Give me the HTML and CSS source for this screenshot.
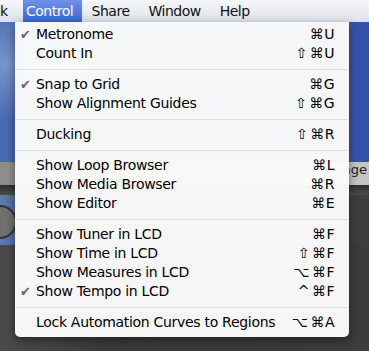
FILE: index.html
```html
<!DOCTYPE html>
<html lang="en">
<head>
  <meta charset="UTF-8" />
  <title>Control menu</title>
  <link rel="stylesheet" href="styles.css">
</head>
<body>
  <div class="screen">
    <div class="menubar">
      <span class="prev">k</span>
      <span class="title active">Control</span>
      <span class="title">Share</span>
      <span class="title">Window</span>
      <span class="title">Help</span>
    </div>

    <div class="desk"></div>
    <div class="toolbar"><span class="tab">age</span></div>
    <div class="edge"></div>
    <div class="track"><span class="knob"></span></div>
    <div class="floor"><span class="playhead"></span></div>

    <ul class="dropdown">
      <li class="item checked"><span>Metronome</span><span class="keys">⌘U</span></li>
      <li class="item"><span>Count In</span><span class="keys"><span class="mod">⇧</span>⌘U</span></li>
      <li class="sep"></li>
      <li class="item checked"><span>Snap to Grid</span><span class="keys">⌘G</span></li>
      <li class="item"><span>Show Alignment Guides</span><span class="keys"><span class="mod">⇧</span>⌘G</span></li>
      <li class="sep"></li>
      <li class="item"><span>Ducking</span><span class="keys"><span class="mod">⇧</span>⌘R</span></li>
      <li class="sep"></li>
      <li class="item"><span>Show Loop Browser</span><span class="keys">⌘L</span></li>
      <li class="item"><span>Show Media Browser</span><span class="keys">⌘R</span></li>
      <li class="item"><span>Show Editor</span><span class="keys">⌘E</span></li>
      <li class="sep"></li>
      <li class="item"><span>Show Tuner in LCD</span><span class="keys">⌘F</span></li>
      <li class="item"><span>Show Time in LCD</span><span class="keys"><span class="mod">⇧</span>⌘F</span></li>
      <li class="item"><span>Show Measures in LCD</span><span class="keys"><span class="mod">⌥</span>⌘F</span></li>
      <li class="item checked"><span>Show Tempo in LCD</span><span class="keys"><span class="mod">^</span>⌘F</span></li>
      <li class="sep"></li>
      <li class="item"><span>Lock Automation Curves to Regions</span><span class="keys"><span class="mod">⌥</span>⌘A</span></li>
    </ul>
  </div>
</body>
</html>
```

FILE: styles.css
```css
body {
  margin: 0;
  font-family: 'DejaVu Sans', 'Liberation Sans', sans-serif;
  background-color: #3b3b3b;
}

.screen {
  position: relative;
  width: 369px;
  height: 351px;
  overflow: hidden;
  display: flex;
  flex-direction: column;
}

.menubar {
  height: 22px;
  display: flex;
  align-items: stretch;
  background: linear-gradient(#f6f7f9, #dde1ea);
  font-size: 14px;
  line-height: 22px;
  letter-spacing: -0.5px;
  color: #111;
  white-space: nowrap;
}

.prev {
  width: 23px;
  overflow: hidden;
}

.title {
  padding: 0 9.5px;
}

.title.active {
  padding: 0 9px 0 3px;
  color: #fff;
  background: linear-gradient(#6d92ea, #3c66d6);
}

.desk {
  height: 140px;
  background:
    radial-gradient(ellipse at 4% 30%, rgba(140, 165, 210, 0.7), transparent 40%),
    linear-gradient(90deg, #4a6ab0, #3c5cb0 60%, #3452a8);
}

.toolbar {
  height: 23px;
  display: flex;
  justify-content: flex-end;
  background: linear-gradient(90deg, #8c8c8c, #b4b4b4 40%, #c4c4c4);
}

.tab {
  font-size: 13px;
  line-height: 16px;
  color: #222;
  padding-right: 2px;
}

.edge {
  height: 10px;
  background: linear-gradient(#2e2e2e, #4c4c4c);
}

.track {
  height: 50px;
  background: linear-gradient(90deg, #5a7cae 0, #4f70a4 15px, #444 15px, #3e3e3e);
}

.knob {
  display: block;
  width: 30px;
  height: 30px;
  margin: 10px 0 0 -17px;
  border-radius: 50%;
  border: 2px solid #333;
  background: #6f6f6f;
}

.floor {
  flex: 1;
  background: linear-gradient(90deg, #4a4a4a, #3a3a3a 30%, #3c3c3c);
}

.playhead {
  display: block;
  margin-left: 117px;
  width: 1px;
  height: 100%;
  background: #8a1d1d;
}

.dropdown {
  position: absolute;
  top: 22px;
  left: 15px;
  width: 334px;
  margin: 0;
  padding: 3px 0 5px;
  list-style: none;
  background: rgba(250, 250, 250, 0.98);
  border-radius: 0 0 5px 5px;
  box-shadow: 0 3px 10px rgba(0, 0, 0, 0.45);
  font-size: 14px;
  color: #000;
}

.item {
  height: 19px;
  line-height: 19px;
  display: flex;
  justify-content: space-between;
  padding: 0 14px 0 21px;
  position: relative;
  white-space: nowrap;
  letter-spacing: -0.3px;
}

.checked::before {
  content: "✔";
  position: absolute;
  left: 5px;
  color: #666;
  font-size: 13px;
}

.keys {
  letter-spacing: 0.5px;
}

.mod {
  margin-right: 2px;
}

.sep {
  height: 12px;
  display: flex;
  align-items: center;
}

.sep::after {
  content: "";
  flex: 1;
  margin: 0 1px;
  border-top: 1px solid #dedede;
}
```
